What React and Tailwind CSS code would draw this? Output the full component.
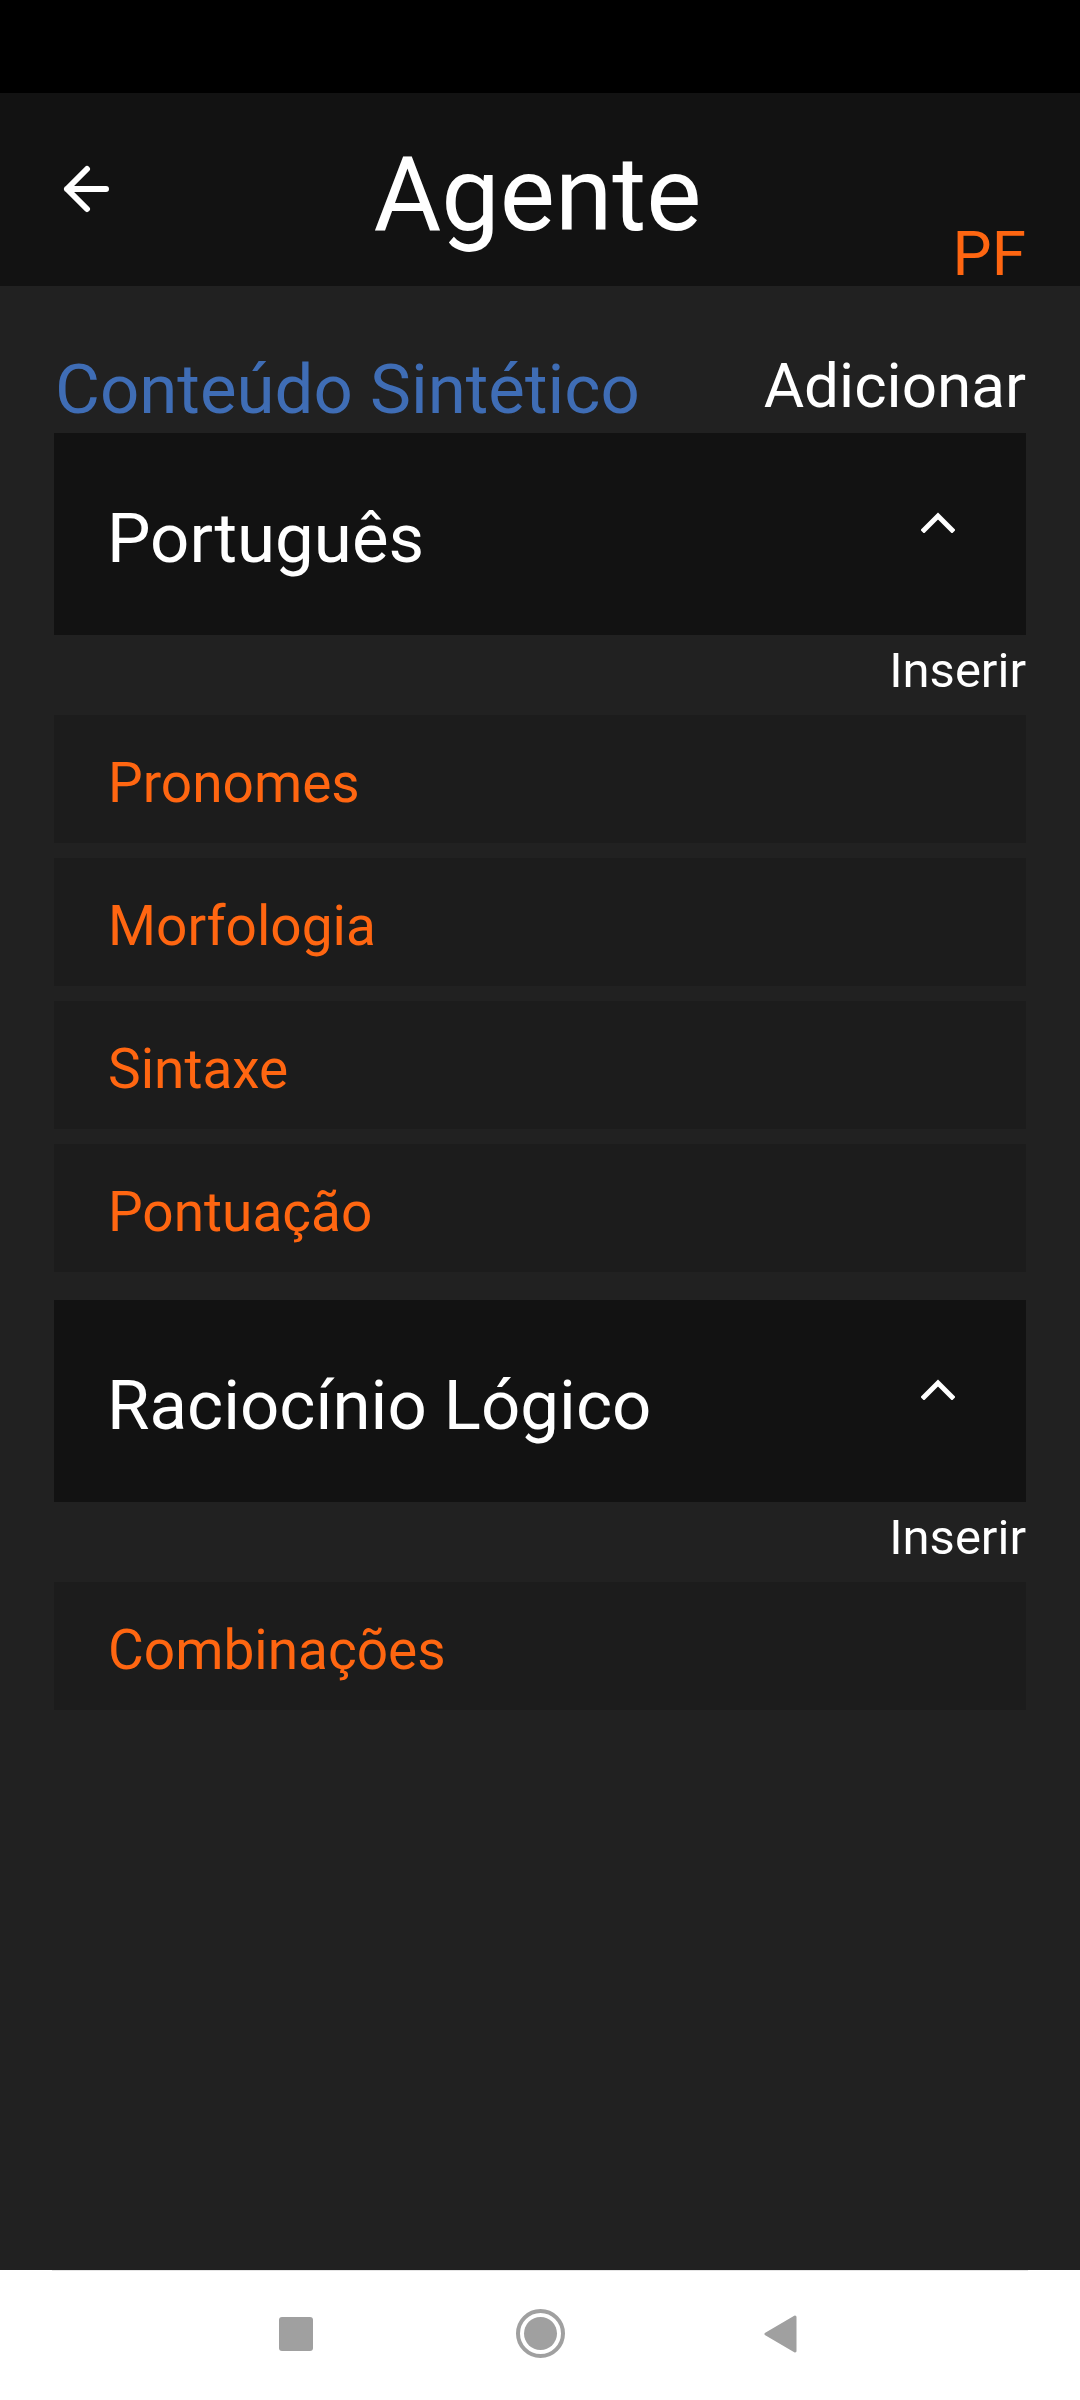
import React from 'react';

const SECTIONS = [
  { title: 'Português', items: ['Pronomes', 'Morfologia', 'Sintaxe', 'Pontuação'] },
  { title: 'Raciocínio Lógico', items: ['Combinações'] },
];

function BackArrow() {
  return (
    <svg width="46" height="48" viewBox="0 0 46 48" fill="none" stroke="#fff" strokeWidth="6" strokeLinecap="round" strokeLinejoin="round">
      <path d="M43 24H4M24 4L4 24l20 20" />
    </svg>
  );
}

function ChevronUp() {
  return (
    <svg width="34" height="22" viewBox="0 0 34 22" fill="none" stroke="#fff" strokeWidth="5" strokeLinecap="square">
      <path d="M3 19L17 5l14 14" />
    </svg>
  );
}

function Section({ title, items }) {
  return (
    <div className="flex flex-col">
      <div className="flex h-[202px] items-start justify-between bg-[#121212] pl-[53px] pr-[71px]">
        <span className="mt-[71px] text-[69px] leading-none text-white">{title}</span>
        <div className="mt-[78px]">
          <ChevronUp />
        </div>
      </div>
      <div className="flex justify-end pt-[11px] pb-[20px]">
        <span className="text-[49px] leading-none text-white">Inserir</span>
      </div>
      <div className="flex flex-col gap-[15px]">
        {items.map((item) => (
          <div key={item} className="h-[128px] bg-[#1c1c1c] pl-[54px] pt-[41px]">
            <span className="text-[55px] leading-none text-[#ff6611]">{item}</span>
          </div>
        ))}
      </div>
    </div>
  );
}

export default function App() {
  return (
    <div className="flex h-[2400px] w-[1080px] flex-col bg-[#212121] font-['Roboto',sans-serif]">
      {/* status bar */}
      <div className="h-[93px] shrink-0 bg-black" />

      {/* header */}
      <header className="flex h-[193px] shrink-0 bg-[#121212] pl-[63px] pr-[54px]">
        <div className="w-[170px] pt-[72px]">
          <BackArrow />
        </div>
        <div className="flex-1 pt-[50px] text-center">
          <span className="mr-[14px] text-[104px] leading-none text-white">Agente</span>
        </div>
        <div className="w-[170px] pt-[130px] text-right">
          <span className="text-[62px] leading-none text-[#ff6611]">PF</span>
        </div>
      </header>

      {/* conteudo */}
      <main className="flex-1 px-[54px]">
        <div className="flex items-start justify-between pt-[69px] pb-[9px]">
          <span className="ml-[1px] text-[69px] leading-none text-[#3f6db5]">Conteúdo Sintético</span>
          <span className="text-[62px] leading-none text-white">Adicionar</span>
        </div>
        <div className="flex flex-col gap-[28px]">
          {SECTIONS.map((s) => (
            <Section key={s.title} {...s} />
          ))}
        </div>
      </main>

      {/* nav bar */}
      <nav className="flex h-[130px] shrink-0 flex-col bg-white">
        <div className="mx-[52px] h-px bg-[#e4e4e4]" />
        <div className="flex flex-1 items-center justify-center pb-[4px] pr-[4px]">
          <div className="h-[34px] w-[34px] rounded-[3px] bg-[#a0a0a0]" />
          <div className="ml-[203px] flex h-[49px] w-[49px] items-center justify-center rounded-full border-[4px] border-[#a0a0a0]">
            <div className="h-[33px] w-[33px] rounded-full bg-[#a0a0a0]" />
          </div>
          <svg className="ml-[198px]" width="34" height="38" viewBox="0 0 34 38">
            <path d="M32 2 L3 19 L32 36 Z" fill="#a0a0a0" stroke="#a0a0a0" strokeWidth="3" strokeLinejoin="round" />
          </svg>
        </div>
      </nav>
    </div>
  );
}
